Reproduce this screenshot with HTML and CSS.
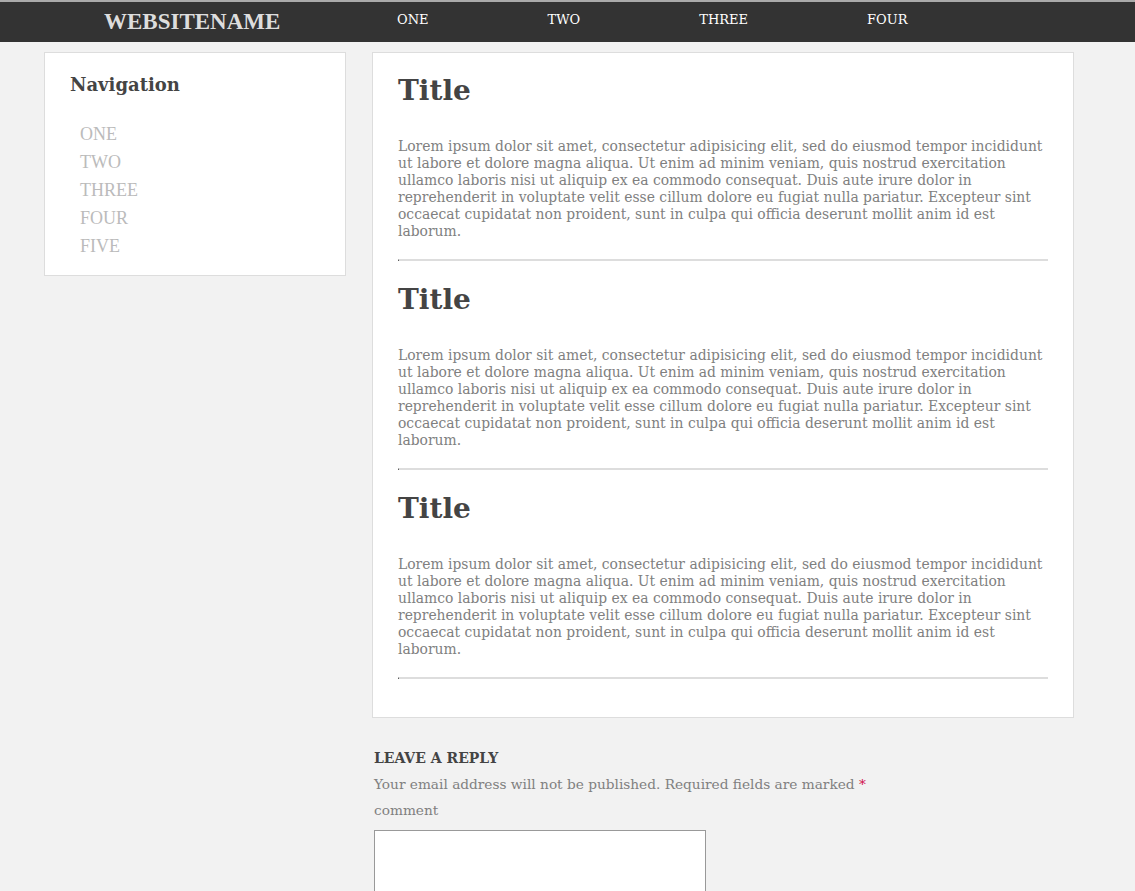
FILE: index.html
```html
<!DOCTYPE html>
<html>
<head>
<meta charset="utf-8">
<link rel="stylesheet" href="styles.css">
</head>
<body>
<header class="topbar">
  <div class="brand">WEBSITENAME</div>
  <nav class="topnav">
    <a href="#">ONE</a>
    <a href="#">TWO</a>
    <a href="#">THREE</a>
    <a href="#">FOUR</a>
  </nav>
</header>
<div class="page">
  <aside class="sidebar">
    <h3 class="side-title">Navigation</h3>
    <ul class="side-list">
      <li><a href="#">ONE</a></li>
      <li><a href="#">TWO</a></li>
      <li><a href="#">THREE</a></li>
      <li><a href="#">FOUR</a></li>
      <li><a href="#">FIVE</a></li>
    </ul>
  </aside>
  <div class="content">
    <main class="posts">
      <article class="post">
        <h1 class="post-title">Title</h1>
        <p class="post-text">Lorem ipsum dolor sit amet, consectetur adipisicing elit, sed do eiusmod tempor incididunt ut labore et dolore magna aliqua. Ut enim ad minim veniam, quis nostrud exercitation ullamco laboris nisi ut aliquip ex ea commodo consequat. Duis aute irure dolor in reprehenderit in voluptate velit esse cillum dolore eu fugiat nulla pariatur. Excepteur sint occaecat cupidatat non proident, sunt in culpa qui officia deserunt mollit anim id est laborum.</p>
        <hr class="sep">
      </article>
      <article class="post">
        <h1 class="post-title">Title</h1>
        <p class="post-text">Lorem ipsum dolor sit amet, consectetur adipisicing elit, sed do eiusmod tempor incididunt ut labore et dolore magna aliqua. Ut enim ad minim veniam, quis nostrud exercitation ullamco laboris nisi ut aliquip ex ea commodo consequat. Duis aute irure dolor in reprehenderit in voluptate velit esse cillum dolore eu fugiat nulla pariatur. Excepteur sint occaecat cupidatat non proident, sunt in culpa qui officia deserunt mollit anim id est laborum.</p>
        <hr class="sep">
      </article>
      <article class="post">
        <h1 class="post-title">Title</h1>
        <p class="post-text">Lorem ipsum dolor sit amet, consectetur adipisicing elit, sed do eiusmod tempor incididunt ut labore et dolore magna aliqua. Ut enim ad minim veniam, quis nostrud exercitation ullamco laboris nisi ut aliquip ex ea commodo consequat. Duis aute irure dolor in reprehenderit in voluptate velit esse cillum dolore eu fugiat nulla pariatur. Excepteur sint occaecat cupidatat non proident, sunt in culpa qui officia deserunt mollit anim id est laborum.</p>
        <hr class="sep">
      </article>
    </main>
    <section class="reply">
      <h4 class="reply-title">LEAVE A REPLY</h4>
      <p class="reply-note">Your email address will not be published. Required fields are marked <span class="req">*</span></p>
      <label class="reply-label" for="c">comment</label>
      <textarea id="c" class="reply-box"></textarea>
    </section>
  </div>
</div>
</body>
</html>
```
FILE: styles.css
```css
html, body {
  margin: 0;
  padding: 0;
}
body {
  background: #f2f2f2;
  font-family: "DejaVu Serif", serif;
  color: #444;
}
a {
  text-decoration: none;
}
.topbar {
  height: 40px;
  background: #333;
  border-top: 2px solid #aaa;
  display: flex;
  align-items: center;
  padding-left: 104px;
}
.brand {
  font-family: "Liberation Serif", serif;
  font-weight: bold;
  font-size: 23px;
  color: #ddd;
  width: 293px;
}
.topnav {
  display: flex;
  gap: 119px;
  margin-top: -5px;
}
.topnav a {
  color: #fff;
  font-size: 13px;
}
.page {
  display: flex;
  align-items: flex-start;
  padding: 10px 0 0 44px;
  gap: 26px;
}
.sidebar {
  width: 300px;
  background: #fff;
  border: 1px solid #ddd;
  padding: 21px 0 15px 0;
}
.side-title {
  margin: 0 0 25px 25px;
  font-size: 18px;
  font-weight: bold;
  color: #444;
}
.side-list {
  list-style: none;
  margin: 0;
  padding: 0 0 0 35px;
}
.side-list li {
  font-family: "Liberation Serif", serif;
  font-size: 18px;
  line-height: 28px;
}
.side-list a {
  color: #bbb;
}
.content {
  width: 702px;
}
.posts {
  background: #fff;
  border: 1px solid #ddd;
  padding: 20px 25px 38px 25px;
}
.post-title {
  font-size: 28px;
  font-weight: bold;
  color: #444;
  margin: 0 0 29px 0;
  line-height: 36px;
}
.post-text {
  font-size: 13.9px;
  line-height: 17px;
  color: #808080;
  margin: 0;
}
.sep {
  border: 0;
  border-top: 2px solid #ddd;
  border-left: 1px solid #333;
  height: 0;
  margin: 19px 0 21px 0;
}
.post:last-child .sep {
  margin-bottom: 0;
}
.reply {
  padding: 32px 2px 0 2px;
}
.reply-title {
  margin: 0 0 10px 0;
  font-size: 14px;
  font-weight: bold;
  color: #444;
}
.reply-note {
  margin: 0 0 10px 0;
  font-size: 13.7px;
  color: #808080;
}
.req {
  color: #d0104c;
}
.reply-label {
  display: block;
  font-size: 13.7px;
  color: #808080;
  margin-bottom: 12px;
}
.reply-box {
  width: 326px;
  height: 150px;
  border: 1px solid #999;
  background: #fff;
  margin: 0;
  padding: 2px;
}
```
